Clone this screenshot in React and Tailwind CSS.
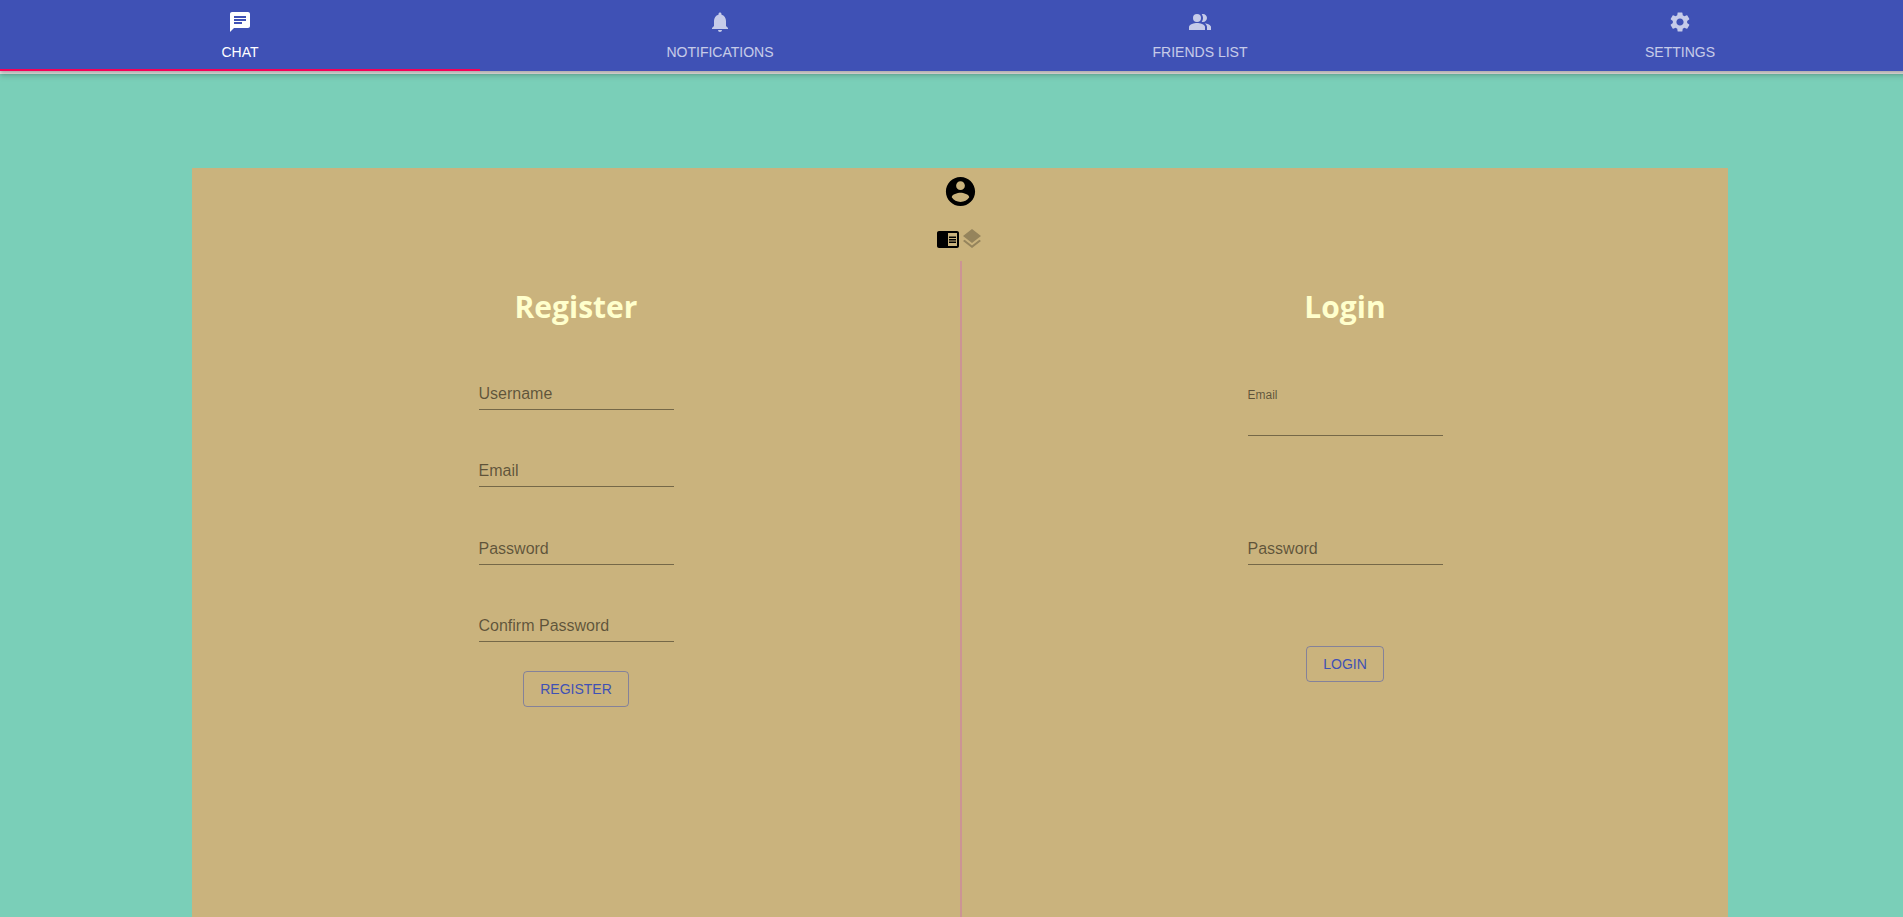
import { useState } from "react";
import {
  MdChat,
  MdChromeReaderMode,
  MdLayers,
  MdNotifications,
  MdSettings,
} from "react-icons/md";

function PeopleIcon({ size }) {
  return (
    <svg width={size} height={size} viewBox="0 0 24 24" fill="currentColor" aria-hidden="true">
      <path d="M16.67 13.13C18.04 14.06 19 15.32 19 17v3h4v-3c0-2.18-3.57-3.47-6.33-3.87z" />
      <circle cx="9" cy="8" r="4" />
      <path d="M15 12c2.21 0 4-1.79 4-4s-1.79-4-4-4c-.47 0-.91.1-1.33.24C14.5 5.27 15 6.58 15 8s-.5 2.73-1.33 3.76c.42.14.86.24 1.33.24z" />
      <path d="M9 13c-2.67 0-8 1.34-8 4v3h16v-3c0-2.66-5.33-4-8-4z" />
    </svg>
  );
}

function AccountIcon({ size }) {
  return (
    <svg width={size} height={size} viewBox="0 0 24 24" fill="currentColor" aria-hidden="true">
      <path d="M12 2C6.48 2 2 6.48 2 12s4.48 10 10 10 10-4.48 10-10S17.52 2 12 2zm0 3c1.66 0 3 1.34 3 3s-1.34 3-3 3-3-1.34-3-3 1.34-3 3-3zm0 14.2c-2.5 0-4.71-1.28-6-3.22.03-1.99 4-3.08 6-3.08 1.99 0 5.97 1.09 6 3.08-1.29 1.94-3.5 3.22-6 3.22z" />
    </svg>
  );
}

const tabs = [
  { label: "CHAT", Icon: MdChat },
  { label: "NOTIFICATIONS", Icon: MdNotifications },
  { label: "FRIENDS LIST", Icon: PeopleIcon },
  { label: "SETTINGS", Icon: MdSettings },
];

function NavTab({ label, Icon, active, onClick }) {
  return (
    <button
      type="button"
      onClick={onClick}
      className={`flex flex-col items-center border-b-2 pt-[10px] text-sm font-medium text-white ${
        active ? "border-[#f50057]" : "border-transparent"
      }`}
    >
      <span className={`flex flex-col items-center gap-[6px] ${active ? "" : "opacity-70"}`}>
        <Icon size={24} />
        <span className="h-[29px] leading-6">{label}</span>
      </span>
    </button>
  );
}

function Field({ id, label, type = "text" }) {
  return (
    <div className="grid w-[195px]">
      <label htmlFor={id} className="col-start-1 row-start-1 pt-5 text-base leading-6 text-black/54">
        {label}
      </label>
      <input
        id={id}
        type={type}
        className="col-start-1 row-start-1 h-12 w-full border-b border-black/42 bg-transparent pt-4 outline-none"
      />
    </div>
  );
}

function ShrunkField({ id, label, type = "text" }) {
  return (
    <div className="flex w-[195px] flex-col">
      <label htmlFor={id} className="pt-[25px] text-xs leading-4 text-black/54">
        {label}
      </label>
      <input
        id={id}
        type={type}
        className="h-[33px] w-full border-b border-black/42 bg-transparent outline-none"
      />
    </div>
  );
}

function OutlinedButton({ children }) {
  return (
    <button
      type="submit"
      className="h-9 rounded border border-[#3f51b5]/50 px-4 text-sm text-[#3f51b5]"
    >
      {children}
    </button>
  );
}

function FormTitle({ children }) {
  return (
    <h1 className="mt-[22px] mb-[31px] font-['Segoe_UI','Open_Sans',sans-serif] text-3xl leading-12 font-bold text-[#ffffcc]">
      {children}
    </h1>
  );
}

export default function App() {
  const [active, setActive] = useState(0);
  const submit = (event) => event.preventDefault();

  return (
    <div className="h-screen overflow-hidden bg-[#7acfb8] font-['Liberation_Sans',Arial,sans-serif]">
      <div className="flex h-full w-[calc(100%+17px)] flex-col">
        <header className="border-b-3 border-[#e6e2e2] shadow-[0_2px_6px_0_rgba(0,0,0,0.15)]">
          <nav className="grid grid-cols-4 bg-[#3f51b5] shadow-[0_2px_4px_0_rgba(0,0,0,0.28)]">
            {tabs.map((tab, i) => (
              <NavTab key={tab.label} {...tab} active={i === active} onClick={() => setActive(i)} />
            ))}
          </nav>
        </header>

        <main className="mx-auto mt-[94px] flex w-4/5 grow flex-col bg-[#cab37d]">
          <div className="flex flex-col items-center pt-[6px]">
            <AccountIcon size={35} />
            <div className="mt-[18px] mb-[10px] flex">
              <MdChromeReaderMode size={24} />
              <MdLayers size={24} className="opacity-26" />
            </div>
          </div>

          <div className="grid grow grid-cols-2">
            <form onSubmit={submit} className="flex flex-col items-center">
              <FormTitle>Register</FormTitle>
              <div className="flex h-[280px] flex-col justify-between">
                <Field id="register-username" label="Username" />
                <Field id="register-email" label="Email" type="email" />
                <Field id="register-password" label="Password" type="password" />
                <Field id="register-confirm" label="Confirm Password" type="password" />
              </div>
              <div className="mt-[29px]">
                <OutlinedButton>REGISTER</OutlinedButton>
              </div>
            </form>
            <form onSubmit={submit} className="flex flex-col items-center border-l-2 border-[#cc9494]">
              <FormTitle>Login</FormTitle>
              <div className="flex h-[203px] flex-col justify-between">
                <ShrunkField id="login-email" label="Email" type="email" />
                <Field id="login-password" label="Password" type="password" />
              </div>
              <div className="mt-[81px]">
                <OutlinedButton>LOGIN</OutlinedButton>
              </div>
            </form>
          </div>
        </main>
      </div>
    </div>
  );
}
